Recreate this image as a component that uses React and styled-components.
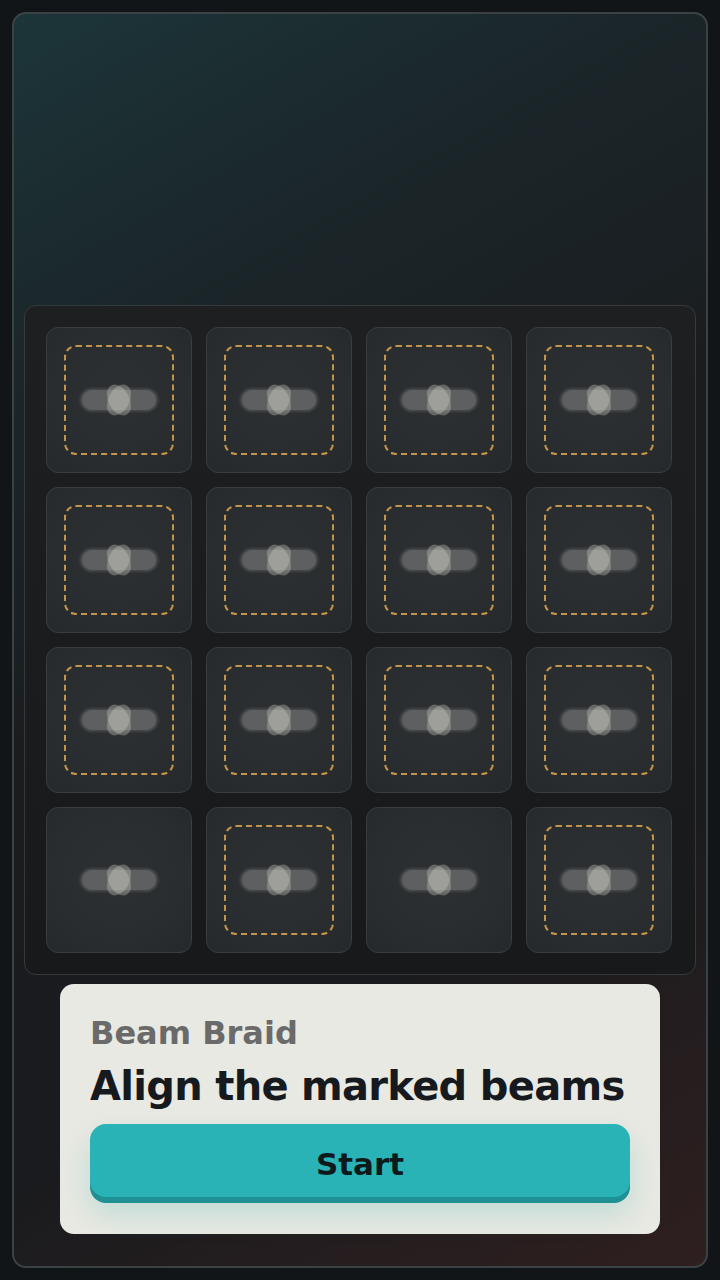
import styled, { createGlobalStyle } from "styled-components";

const GlobalStyle = createGlobalStyle`
  html, body {
    margin: 0;
    padding: 0;
    background: #121518;
  }
  body {
    font-family: "DejaVu Sans", "Liberation Sans", sans-serif;
  }
`;

const Page = styled.div`
  width: 720px;
  height: 1280px;
  padding: 12px;
  box-sizing: border-box;
`;

const Frame = styled.div`
  height: 100%;
  box-sizing: border-box;
  border: 2px solid #3b4244;
  border-radius: 14px;
  background: linear-gradient(
    150deg,
    #1c3539 0%,
    #1b262a 22%,
    #1a1d20 45%,
    #191b1e 70%,
    #2f1f1f 100%
  );
  padding: 0 10px 32px;
  display: flex;
  flex-direction: column;
  justify-content: flex-end;
  align-items: center;
  gap: 9px;
`;

const Board = styled.div`
  width: 672px;
  box-sizing: border-box;
  padding: 21px;
  border: 1px solid #35393b;
  border-radius: 12px;
  background: linear-gradient(180deg, #1d1f21 0%, #17191b 100%);
  display: grid;
  grid-template-columns: repeat(4, 146px);
  grid-auto-rows: 146px;
  gap: 14px;
`;

const Tile = styled.div`
  box-sizing: border-box;
  border: 1.5px solid #3a3d40;
  border-radius: 12px;
  background: radial-gradient(circle at 50% 45%, #2d3032 0%, #2a2d2f 60%, #26292b 100%);
  display: flex;
  align-items: center;
  justify-content: center;
  position: relative;
`;

const Marker = styled.div`
  position: absolute;
  inset: 17px;
  border: 2px dashed #c39449;
  border-radius: 12px;
`;

const BeamIcon = () => (
  <svg width="84" height="38" viewBox="0 0 84 38" style={{ position: "relative" }}>
    <defs>
      <filter id="soft" x="-20%" y="-50%" width="140%" height="200%">
        <feGaussianBlur stdDeviation="0.8" />
      </filter>
    </defs>
    <rect x="3" y="7.5" width="78" height="23" rx="11.5" fill="#4c4e4f" filter="url(#soft)" />
    <rect x="5" y="9" width="74" height="20" rx="10" fill="#5d5f60" />
    <ellipse cx="42" cy="19" rx="10.5" ry="16.5" fill="rgba(215,216,205,0.32)" transform="rotate(28 42 19)" />
    <ellipse cx="42" cy="19" rx="10.5" ry="16.5" fill="rgba(215,216,205,0.32)" transform="rotate(-28 42 19)" />
  </svg>
);

const Card = styled.div`
  width: 600px;
  box-sizing: border-box;
  padding: 30px 30px 30px;
  border-radius: 14px;
  background: #e8e9e2;
  display: flex;
  flex-direction: column;
`;

const Subtitle = styled.div`
  font-size: 32px;
  line-height: 38px;
  font-weight: 700;
  color: #6a6a6a;
`;

const Title = styled.div`
  margin-top: 10px;
  font-size: 40px;
  line-height: 48px;
  font-weight: 700;
  letter-spacing: -0.7px;
  color: #16191d;
`;

const StartButton = styled.button`
  margin-top: 14px;
  height: 73px;
  border: none;
  border-radius: 16px;
  background: #29b3b7;
  box-shadow: 0 6px 0 #1f9093, 0 16px 30px rgba(40, 170, 170, 0.22);
  font-family: "DejaVu Sans", "Liberation Sans", sans-serif;
  font-size: 31px;
  font-weight: 700;
  color: #0d1a1c;
  padding: 6px 0 0;
  margin-bottom: 7px;
`;

const marked = [
  true, true, true, true,
  true, true, true, true,
  true, true, true, true,
  false, true, false, true,
];

export default function App() {
  return (
    <>
      <GlobalStyle />
      <Page>
        <Frame>
          <Board>
            {marked.map((m, i) => (
              <Tile key={i}>
                {m && <Marker />}
                <BeamIcon />
              </Tile>
            ))}
          </Board>
          <Card>
            <Subtitle>Beam Braid</Subtitle>
            <Title>Align the marked beams</Title>
            <StartButton>Start</StartButton>
          </Card>
        </Frame>
      </Page>
    </>
  );
}
